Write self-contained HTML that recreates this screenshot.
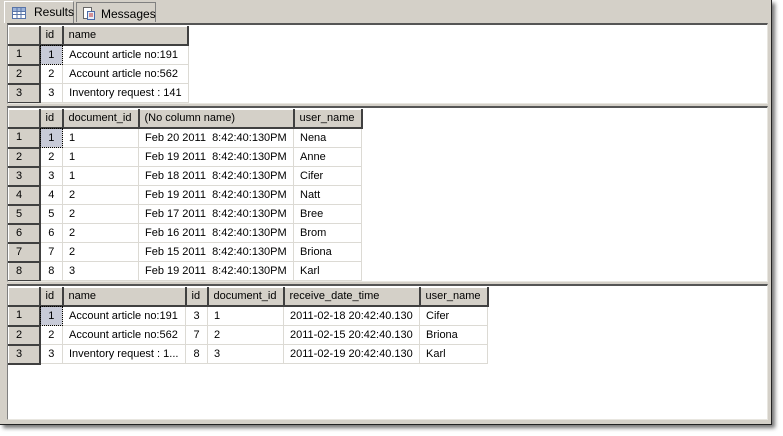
<!DOCTYPE html>
<html><head><style>
body{margin:0;width:783px;height:436px;background:#fff;overflow:hidden;font-family:"Liberation Sans",sans-serif;font-size:11px;color:#000}
.win{position:absolute;left:0;top:0;width:771px;height:424px;background:#d4d0c8;border-right:1px solid #222;border-bottom:1px solid #222;box-shadow:3px 3px 4px rgba(0,0,0,.55)}
.panel{position:absolute;left:7px;width:759px;background:#fff;border-top:2px solid #555;border-left:1px solid #808080;border-right:1px solid #e8e6e0;border-bottom:1px solid #e8e6e0;overflow:hidden}
table{position:absolute;left:0;top:1px;border-collapse:collapse;table-layout:fixed}
td{height:18px;padding:0 0 0 6px;border:1px solid #dcdad4;white-space:nowrap;overflow:hidden;line-height:18px}
tr.h td{background:#d4d0c8;border:1px solid #d4d0c8;border-top-color:#fff;border-left-color:#fff;border-right:2px solid #404040;border-bottom:2px solid #404040;padding-left:5px;height:17px;line-height:17px}
td.r{background:#d4d0c8;border-top:1px solid #fff;border-left:1px solid #fff;border-right:2px solid #404040;border-bottom:2px solid #404040;padding-left:7px;height:17px;line-height:17px}
td.c{text-align:center;padding:0}
td.sel{background:#c8cbd8;outline:1px dotted #000;outline-offset:-1px}
.tab{position:absolute;top:2px;height:19px;border:1px solid #808080;border-bottom:none;background:#d4d0c8;line-height:21px;font-size:12px}
</style></head><body>
<div class="win">
<div class="tab" style="left:4px;width:68px;background:#d4d0c8;border-color:#fff #808080 #808080 #fff;top:1px;height:21px">
<svg style="position:absolute;left:7px;top:5px" width="14" height="12"><rect x="0.5" y="0.5" width="13" height="11" fill="#fff" stroke="#5874a8"/><rect x="1" y="1" width="12" height="3" fill="#9db3d8"/><path d="M1 4.5H13M1 7.5H13M5 1V11M9 1V11" stroke="#5874a8"/></svg>
<span style="position:absolute;left:29px">Results</span></div>
<div class="tab" style="left:76px;width:78px">
<svg style="position:absolute;left:5px;top:3px" width="14" height="15"><rect x="1.5" y="1.5" width="8" height="11" fill="#fff" stroke="#666"/><rect x="5.5" y="5.5" width="7" height="8" fill="#e8eef8" stroke="#4a6aa8"/><path d="M7 8H11M7 10H11" stroke="#c03030"/></svg>
<span style="position:absolute;left:24px;top:1px">Messages</span></div>

<div class="panel" style="top:23px;height:78px">
<table style="width:181px">
<col style="width:31px"><col style="width:23px"><col style="width:125px">
<tr class="h"><td></td><td>id</td><td>name</td></tr>
<tr><td class="r">1</td><td class="c sel">1</td><td>Account article no:191</td></tr>
<tr><td class="r">2</td><td class="c">2</td><td>Account article no:562</td></tr>
<tr><td class="r">3</td><td class="c">3</td><td>Inventory request : 141</td></tr>
</table></div>

<div class="panel" style="top:106px;height:173px">
<table style="width:354px">
<col style="width:31px"><col style="width:23px"><col style="width:76px"><col style="width:155px"><col style="width:68px">
<tr class="h"><td></td><td>id</td><td>document_id</td><td>(No column name)</td><td>user_name</td></tr>
<tr><td class="r">1</td><td class="c sel">1</td><td>1</td><td>Feb 20 2011&nbsp; 8:42:40:130PM</td><td>Nena</td></tr>
<tr><td class="r">2</td><td class="c">2</td><td>1</td><td>Feb 19 2011&nbsp; 8:42:40:130PM</td><td>Anne</td></tr>
<tr><td class="r">3</td><td class="c">3</td><td>1</td><td>Feb 18 2011&nbsp; 8:42:40:130PM</td><td>Cifer</td></tr>
<tr><td class="r">4</td><td class="c">4</td><td>2</td><td>Feb 19 2011&nbsp; 8:42:40:130PM</td><td>Natt</td></tr>
<tr><td class="r">5</td><td class="c">5</td><td>2</td><td>Feb 17 2011&nbsp; 8:42:40:130PM</td><td>Bree</td></tr>
<tr><td class="r">6</td><td class="c">6</td><td>2</td><td>Feb 16 2011&nbsp; 8:42:40:130PM</td><td>Brom</td></tr>
<tr><td class="r">7</td><td class="c">7</td><td>2</td><td>Feb 15 2011&nbsp; 8:42:40:130PM</td><td>Briona</td></tr>
<tr><td class="r">8</td><td class="c">8</td><td>3</td><td>Feb 19 2011&nbsp; 8:42:40:130PM</td><td>Karl</td></tr>
</table></div>

<div class="panel" style="top:284px;height:133px">
<table style="width:480px">
<col style="width:31px"><col style="width:23px"><col style="width:123px"><col style="width:22px"><col style="width:76px"><col style="width:136px"><col style="width:68px">
<tr class="h"><td></td><td>id</td><td>name</td><td>id</td><td>document_id</td><td>receive_date_time</td><td>user_name</td></tr>
<tr><td class="r">1</td><td class="c sel">1</td><td>Account article no:191</td><td class="c">3</td><td>1</td><td>2011-02-18 20:42:40.130</td><td>Cifer</td></tr>
<tr><td class="r">2</td><td class="c">2</td><td>Account article no:562</td><td class="c">7</td><td>2</td><td>2011-02-15 20:42:40.130</td><td>Briona</td></tr>
<tr><td class="r">3</td><td class="c">3</td><td>Inventory request : 1...</td><td class="c">8</td><td>3</td><td>2011-02-19 20:42:40.130</td><td>Karl</td></tr>
</table></div>
</div>
</body></html>
